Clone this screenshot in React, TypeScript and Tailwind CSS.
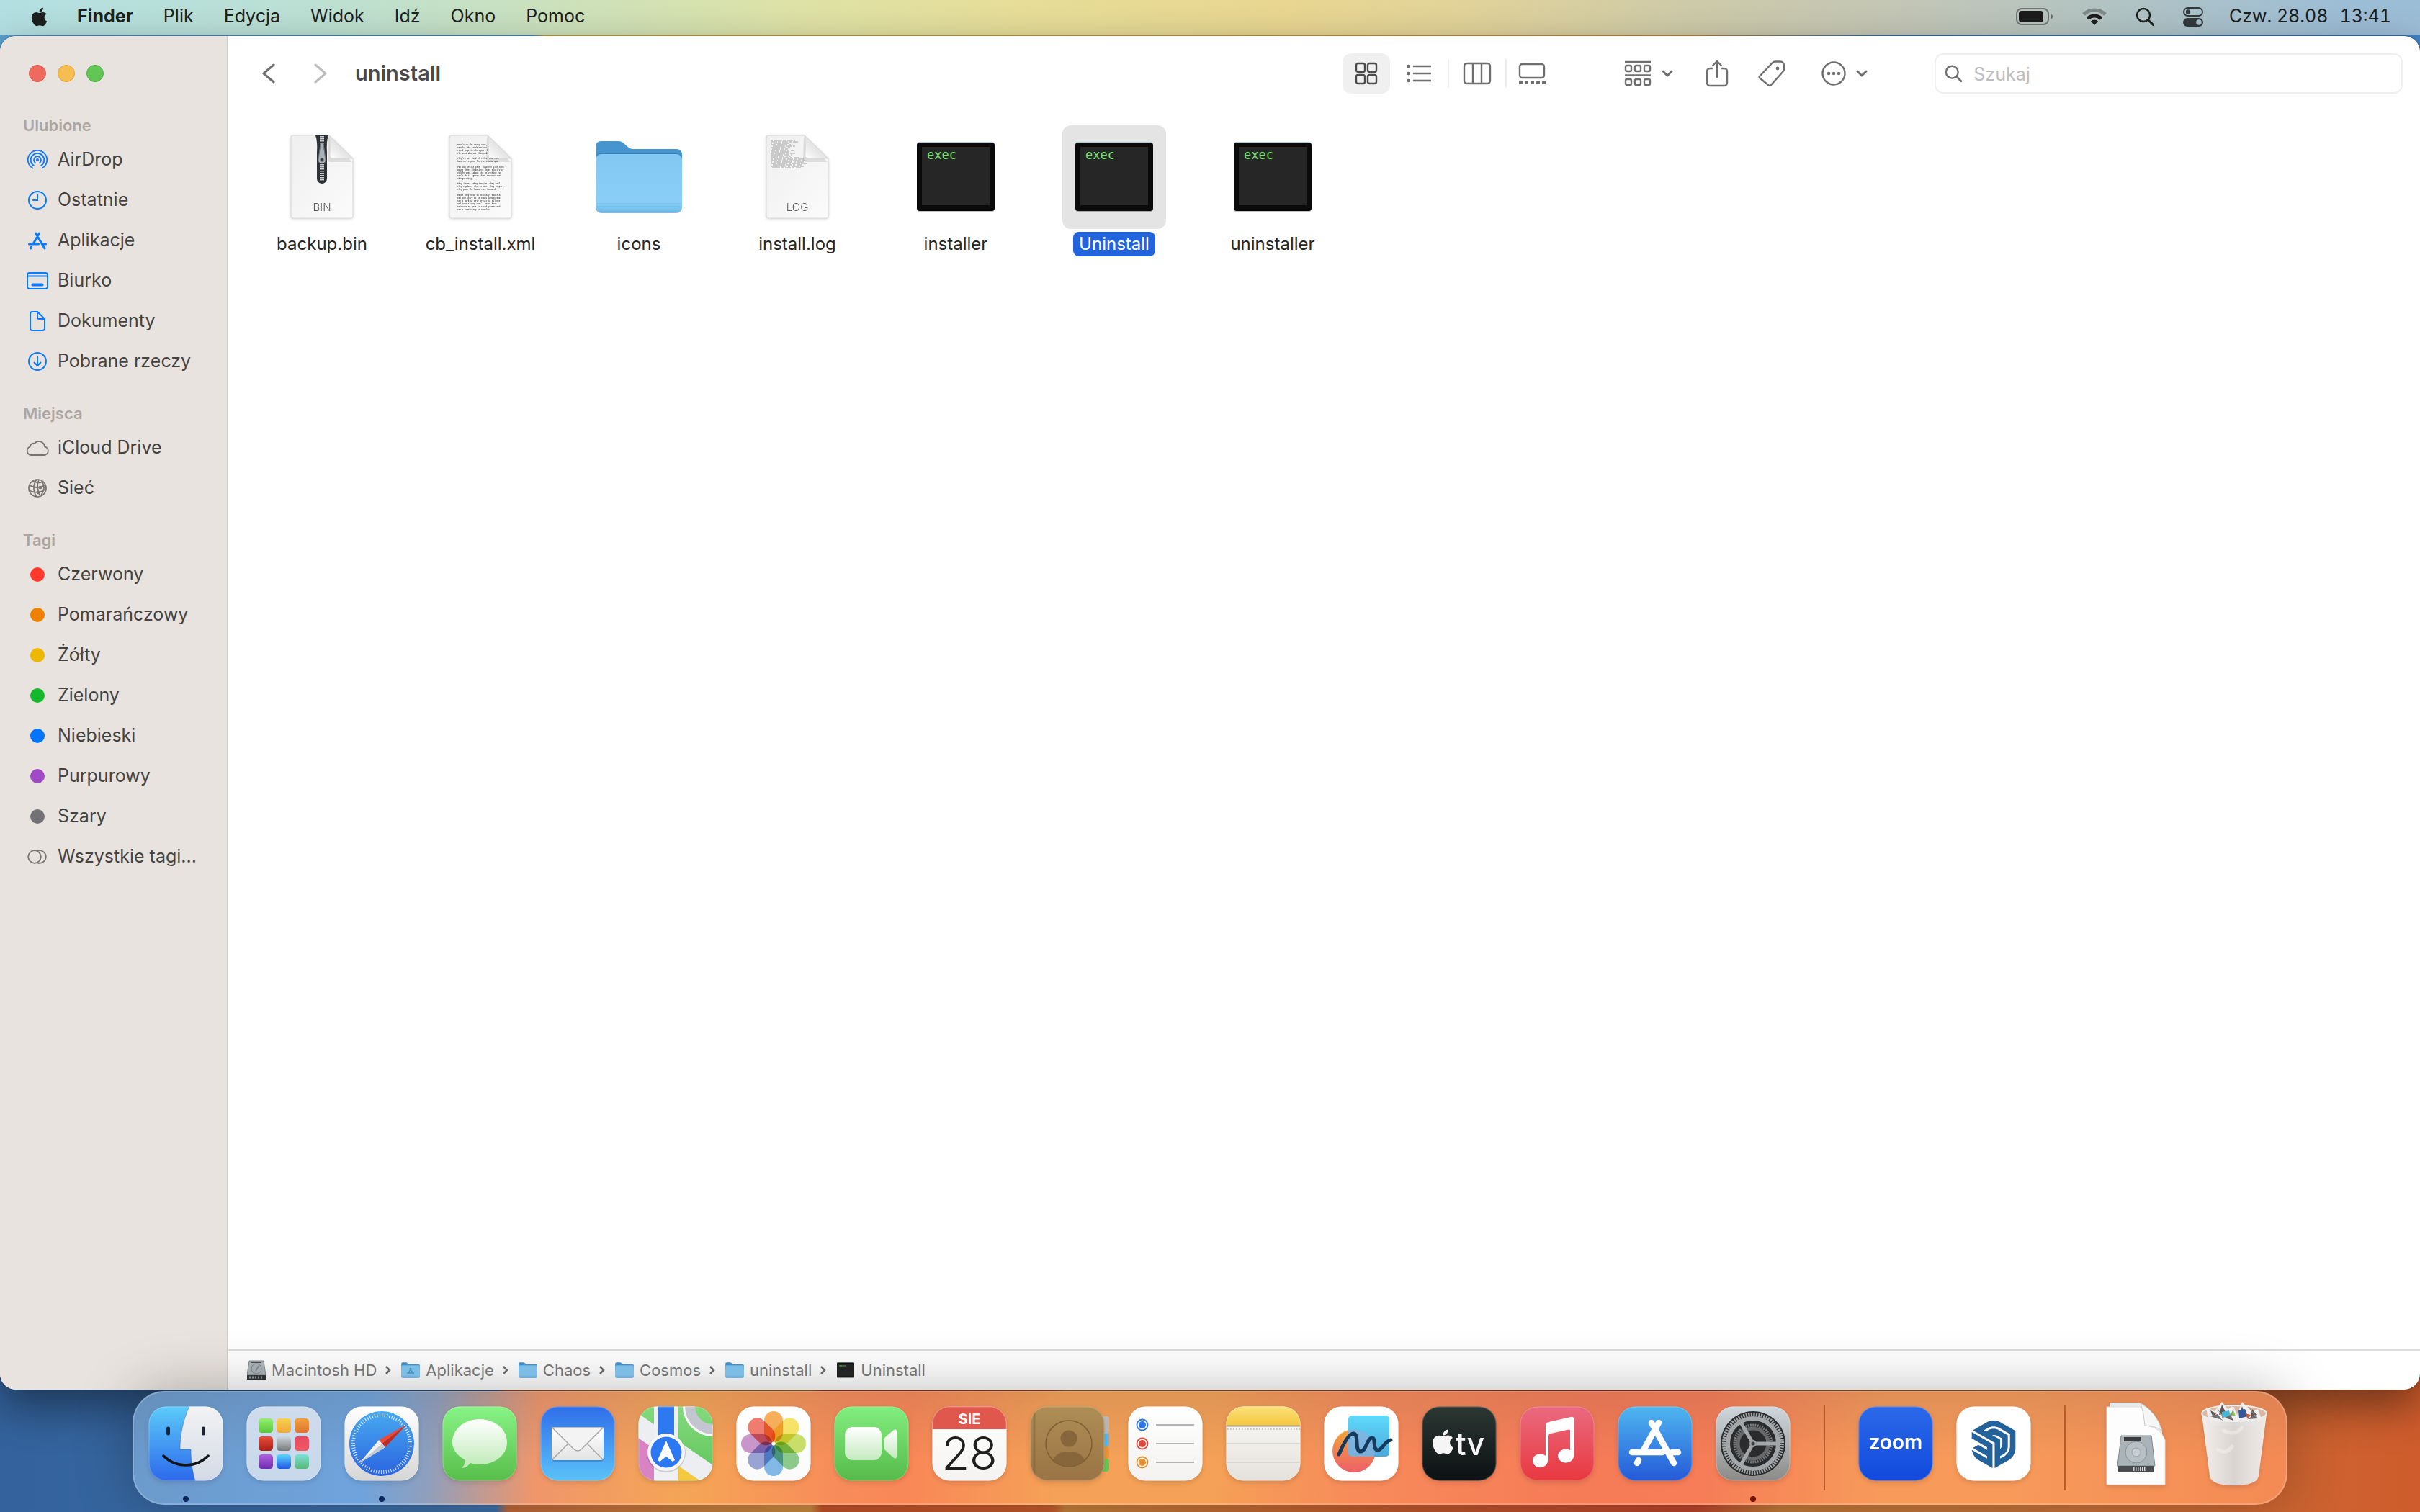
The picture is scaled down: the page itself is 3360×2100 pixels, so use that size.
import type { ReactNode } from 'react'
import { FaApple } from 'react-icons/fa'
import { SiSketchup } from 'react-icons/si'

type IconProps = { className?: string }

/* ---------- menu bar ---------- */

const menus = ['Plik', 'Edycja', 'Widok', 'Idź', 'Okno', 'Pomoc']

const BatteryIcon = () => (
  <svg viewBox="0 0 52 26" className="h-[26px] w-[52px]" fill="none" aria-hidden="true">
    <rect x="1" y="2" width="44" height="22" rx="7" stroke="#1c1c1c" strokeOpacity=".45" strokeWidth="2" />
    <rect x="4" y="5" width="34" height="16" rx="4" fill="#1c1c1c" />
    <path d="M48 9v8c2-1 3-2 3-4s-1-3-3-4z" fill="#1c1c1c" fillOpacity=".5" />
  </svg>
)

const WifiIcon = () => (
  <svg viewBox="0 0 34 26" className="h-[26px] w-[34px]" fill="none" strokeWidth="5" aria-hidden="true">
    <path d="M2 10a21.500 21.500 0 0 1 30 0" stroke="#1c1c1c" strokeOpacity=".35" />
    <path d="M7.500 16a13.500 13.500 0 0 1 19 0" stroke="#1c1c1c" />
    <path d="M17 25l-5-5.500a7 7 0 0 1 10 0z" fill="#1c1c1c" />
  </svg>
)

const SearchIcon = ({ className }: IconProps) => (
  <svg viewBox="0 0 26 26" className={className} fill="none" stroke="currentColor" strokeLinecap="round" aria-hidden="true">
    <circle cx="11" cy="11" r="9" strokeWidth="2.500" />
    <path d="M17.500 17.500l7 7" strokeWidth="3" />
  </svg>
)

const ControlCenterIcon = () => (
  <svg viewBox="0 0 28 28" className="size-7" aria-hidden="true">
    <rect x="1" y="2" width="26" height="11" rx="5.500" fill="none" stroke="#32383b" strokeWidth="2" />
    <circle cx="7" cy="7.500" r="3.200" fill="#32383b" />
    <rect x="0" y="16" width="28" height="12" rx="6" fill="#32383b" />
    <circle cx="22" cy="22" r="3.800" fill="#a6c0cc" />
  </svg>
)

const MenuBar = () => (
  <header className="flex h-12 items-center bg-[linear-gradient(90deg,#b3dfe2_0%,#bce0d3_13%,#cfe1b7_25%,#dee2a6_33%,#e6dd98_42%,#e8d691_53%,#e2d398_60%,#cdcaa9_70%,#c4c6b5_78%,#b0c3c4_88%,#9cbdd6_97%)] px-10 pb-0.5 text-[25px] text-[#1c1f1e]">
    <button type="button" aria-label="Apple" className="mr-[38px]">
      <FaApple className="size-[29px]" />
    </button>
    <nav className="flex items-center gap-[42px]">
      <button type="button" className="font-bold">
        Finder
      </button>
      {menus.map((menu) => (
        <button key={menu} type="button">
          {menu}
        </button>
      ))}
    </nav>
    <div className="ml-auto flex items-center gap-10">
      <BatteryIcon />
      <WifiIcon />
      <SearchIcon className="size-[26px]" />
      <ControlCenterIcon />
      <time className="-ml-1 flex gap-4 tabular-nums">
        <span>Czw. 28.08</span>
        <span>13:41</span>
      </time>
    </div>
  </header>
)

/* ---------- sidebar ---------- */

const AirDropIcon = () => (
  <svg viewBox="0 0 32 32" className="size-8" fill="none" stroke="#0a7aff" strokeWidth="1.800" strokeLinecap="round" aria-hidden="true">
    <circle cx="16" cy="16" r="2" fill="#0a7aff" stroke="none" />
    <path d="M13 20.200a5 5 0 1 1 6 0" />
    <path d="M11 24a9.300 9.300 0 1 1 10 0" />
    <path d="M9.500 27.500a13.200 13.200 0 1 1 13 0" />
  </svg>
)

const ClockIcon = () => (
  <svg viewBox="0 0 32 32" className="size-8" fill="none" stroke="#0a7aff" strokeWidth="2" strokeLinecap="round" aria-hidden="true">
    <circle cx="16" cy="16" r="12" />
    <path d="M16 8.500V16H10" />
  </svg>
)

const AppsIcon = () => (
  <svg viewBox="0 0 32 32" className="size-8" fill="none" stroke="#0a7aff" strokeWidth="3" strokeLinecap="round" aria-hidden="true">
    <path d="M18.500 6L10.500 20M13.500 6l12.500 21M4.500 21h13M23 21h4.500M7.500 25l-1 2" />
  </svg>
)

const DesktopIcon = () => (
  <svg viewBox="0 0 32 32" className="size-8" fill="none" stroke="#0a7aff" strokeWidth="2" aria-hidden="true">
    <rect x="2" y="5" width="28" height="22" rx="3" />
    <path d="M2 9.500h28" />
    <rect x="8" y="20" width="16" height="3" rx="1" fill="#0a7aff" stroke="#0a7aff" strokeWidth="1" />
  </svg>
)

const DocIcon = () => (
  <svg viewBox="0 0 32 32" className="size-8" fill="none" stroke="#0a7aff" strokeWidth="2" strokeLinejoin="round" aria-hidden="true">
    <path d="M9 3h7l10 10v13a3 3 0 0 1-3 3H9a3 3 0 0 1-3-3V6a3 3 0 0 1 3-3zM16 3v8a2 2 0 0 0 2 2h8" />
  </svg>
)

const DownloadIcon = () => (
  <svg viewBox="0 0 32 32" className="size-8" fill="none" stroke="#0a7aff" strokeWidth="2" strokeLinecap="round" strokeLinejoin="round" aria-hidden="true">
    <circle cx="16" cy="16" r="12" />
    <path d="M16 9.500v12M11.500 17.500l4.500 4.500 4.500-4.500" />
  </svg>
)

const CloudIcon = () => (
  <svg viewBox="0 0 32 32" className="size-8" fill="none" stroke="#777472" strokeWidth="1.800" strokeLinejoin="round" aria-hidden="true">
    <path d="M7.500 26a6 6 0 0 1-1.600-11.700 4.800 4.800 0 0 1 6-4.500A8 8 0 0 1 26 14.500 5.800 5.800 0 0 1 25.500 26z" />
  </svg>
)

const NetworkIcon = () => (
  <svg viewBox="0 0 32 32" className="size-8" fill="none" stroke="#777472" strokeWidth="1.700" aria-hidden="true">
    <circle cx="16" cy="16" r="12" />
    <path d="M15 4c-6 7-5 17 0 24M18 4c-3 7-2 17 2 23.500M22 6c4 6 4 13-1 20M5 12c7 4 15 4 22-1M4 19c8 4 17 3 24-2M10 6c3 3 10 3 13 1" />
    <circle cx="17" cy="22" r="1.500" fill="#777472" />
    <circle cx="20" cy="15" r="1.500" fill="#777472" />
  </svg>
)

const AllTagsIcon = () => (
  <svg viewBox="0 0 32 32" className="size-8" fill="none" stroke="#777472" strokeWidth="1.800" aria-hidden="true">
    <circle cx="12" cy="16" r="8.800" />
    <path d="M15.500 7.900a8.800 8.800 0 1 1 0 16.200" />
  </svg>
)

type SidebarEntry = { label: string; icon: ReactNode }

const tag = (label: string, color: string): SidebarEntry => ({
  label,
  icon: <span className={`size-5 rounded-full ${color}`} />,
})

const sections: { title: string; entries: SidebarEntry[] }[] = [
  {
    title: 'Ulubione',
    entries: [
      { label: 'AirDrop', icon: <AirDropIcon /> },
      { label: 'Ostatnie', icon: <ClockIcon /> },
      { label: 'Aplikacje', icon: <AppsIcon /> },
      { label: 'Biurko', icon: <DesktopIcon /> },
      { label: 'Dokumenty', icon: <DocIcon /> },
      { label: 'Pobrane rzeczy', icon: <DownloadIcon /> },
    ],
  },
  {
    title: 'Miejsca',
    entries: [
      { label: 'iCloud Drive', icon: <CloudIcon /> },
      { label: 'Sieć', icon: <NetworkIcon /> },
    ],
  },
  {
    title: 'Tagi',
    entries: [
      tag('Czerwony', 'bg-[#ff3a2d]'),
      tag('Pomarańczowy', 'bg-[#ee8100]'),
      tag('Żółty', 'bg-[#ecb900]'),
      tag('Zielony', 'bg-[#15b82c]'),
      tag('Niebieski', 'bg-[#0474f9]'),
      tag('Purpurowy', 'bg-[#a14ac6]'),
      tag('Szary', 'bg-[#727176]'),
      { label: 'Wszystkie tagi...', icon: <AllTagsIcon /> },
    ],
  },
]

const Sidebar = () => (
  <aside className="flex w-[317px] shrink-0 flex-col border-r-2 border-[#cfcac6] bg-[#e8e3df]">
    <div className="flex gap-4 px-10 pt-10 pb-[42px]">
      <button type="button" aria-label="Zamknij" className="size-6 rounded-full border border-[#d9584d] bg-[#ee6a5f]" />
      <button type="button" aria-label="Minimalizuj" className="size-6 rounded-full border border-[#dba43a] bg-[#f6be50]" />
      <button type="button" aria-label="Powiększ" className="size-6 rounded-full border border-[#4fae44] bg-[#61c655]" />
    </div>
    <nav className="flex flex-col gap-[26px]">
      {sections.map(({ title, entries }) => (
        <section key={title}>
          <h2 className="mb-0.5 h-9 pl-8 text-[22px] leading-9 font-semibold text-[#aca6a2]">{title}</h2>
          <ul>
            {entries.map(({ label, icon }) => (
              <li key={label}>
                <a href="#" className="flex h-14 items-center gap-3 pl-9 text-[25px] whitespace-nowrap text-[#454341]">
                  <span className="flex w-8 justify-center">{icon}</span>
                  {label}
                </a>
              </li>
            ))}
          </ul>
        </section>
      ))}
    </nav>
  </aside>
)

/* ---------- toolbar ---------- */

const Chevron = ({ className }: IconProps) => (
  <svg viewBox="0 0 16 10" className={className} fill="none" stroke="currentColor" strokeWidth="3" strokeLinecap="round" strokeLinejoin="round" aria-hidden="true">
    <path d="M2 2l6 6 6-6" />
  </svg>
)

const Toolbar = () => (
  <div className="flex h-[104px] shrink-0 items-center pr-6 pl-10 text-[#6f6f6f]">
    <button type="button" aria-label="Wstecz" className="flex w-8 justify-center">
      <svg viewBox="0 0 18 30" className="h-[30px] w-[18px]" fill="none" stroke="currentColor" strokeWidth="3" strokeLinecap="round" strokeLinejoin="round">
        <path d="M16 3L2 15l14 12" />
      </svg>
    </button>
    <button type="button" aria-label="Dalej" className="ml-10 flex w-8 justify-center text-[#bdbdbd]">
      <svg viewBox="0 0 18 30" className="h-[30px] w-[18px]" fill="none" stroke="currentColor" strokeWidth="3" strokeLinecap="round" strokeLinejoin="round">
        <path d="M2 3l14 12L2 27" />
      </svg>
    </button>
    <h1 className="ml-8 text-[29px] font-semibold text-[#4a4a4a]">uninstall</h1>

    <div className="ml-auto flex items-center">
      <button type="button" aria-label="Ikony" className="flex h-14 w-[66px] items-center justify-center rounded-xl bg-[#f0f0f0] text-[#4a4a4a]">
        <svg viewBox="0 0 32 32" className="size-8" fill="none" stroke="currentColor" strokeWidth="2.400">
          <rect x="2" y="2" width="12" height="12" rx="2.500" />
          <rect x="18" y="2" width="12" height="12" rx="2.500" />
          <rect x="2" y="18" width="12" height="12" rx="2.500" />
          <rect x="18" y="18" width="12" height="12" rx="2.500" />
        </svg>
      </button>
      <button type="button" aria-label="Lista" className="flex w-20 justify-center">
        <svg viewBox="0 0 34 26" className="h-[26px] w-[34px]" fill="none" stroke="currentColor" strokeWidth="2.600" strokeLinecap="round">
          <path d="M10 3h23M10 13h23M10 23h23" />
          <path d="M2.500 3h.1M2.500 13h.1M2.500 23h.1" strokeWidth="4.500" />
        </svg>
      </button>
      <span className="h-10 w-0.5 bg-[#ececec]" />
      <button type="button" aria-label="Kolumny" className="flex w-[78px] justify-center">
        <svg viewBox="0 0 40 32" className="h-8 w-10" fill="none" stroke="currentColor" strokeWidth="2.400">
          <rect x="2" y="2" width="36" height="28" rx="4" />
          <path d="M14 2v28M26 2v28" />
        </svg>
      </button>
      <span className="h-10 w-0.5 bg-[#ececec]" />
      <button type="button" aria-label="Galeria" className="flex w-[70px] justify-center">
        <svg viewBox="0 0 38 32" className="h-8 w-[38px]" fill="none" stroke="currentColor" strokeWidth="2.400">
          <rect x="2" y="3" width="34" height="19" rx="3.500" />
          <path d="M1 28.500h37" strokeWidth="5" strokeDasharray="5 3" />
        </svg>
      </button>
      <button type="button" aria-label="Grupuj" className="ml-[78px] flex w-[98px] items-center justify-center gap-3.5">
        <svg viewBox="0 0 38 36" className="h-9 w-[38px]" fill="none" stroke="currentColor" strokeWidth="2.400">
          <path d="M1 2h36M1 20.500h36" />
          <rect x="2" y="7" width="8" height="8" rx="2" />
          <rect x="15" y="7" width="8" height="8" rx="2" />
          <rect x="28" y="7" width="8" height="8" rx="2" />
          <rect x="2" y="26" width="8" height="8" rx="2" />
          <rect x="15" y="26" width="8" height="8" rx="2" />
          <rect x="28" y="26" width="8" height="8" rx="2" />
        </svg>
        <Chevron className="h-2.5 w-4" />
      </button>
      <button type="button" aria-label="Udostępnij" className="ml-2.5 flex w-[72px] justify-center">
        <svg viewBox="0 0 32 38" className="h-[38px] w-8" fill="none" stroke="currentColor" strokeWidth="2.400" strokeLinecap="round" strokeLinejoin="round">
          <path d="M10 12H6a4 4 0 0 0-4 4v16a4 4 0 0 0 4 4h20a4 4 0 0 0 4-4V16a4 4 0 0 0-4-4h-4M16 24V2M10 8l6-6 6 6" />
        </svg>
      </button>
      <button type="button" aria-label="Tagi" className="flex w-20 justify-center">
        <svg viewBox="0 0 38 38" className="size-[38px]" fill="none" stroke="currentColor" strokeWidth="2.400" strokeLinejoin="round">
          <path d="M2 23L20 4q1.500-1.500 3.500-1.500H31q2 0 3.500 1.500T36 7.500V13q0 2-1.500 3.500L18 35q-2 2-4 0L2.500 25.500q-1.500-1.500-.500-2.500z" />
          <circle cx="27" cy="12" r="2.400" fill="currentColor" stroke="none" />
        </svg>
      </button>
      <button type="button" aria-label="Więcej" className="ml-3 flex w-[98px] items-center justify-center gap-3.5">
        <svg viewBox="0 0 34 34" className="size-[34px]" fill="none" stroke="currentColor" strokeWidth="2.400">
          <circle cx="17" cy="17" r="15.500" />
          <path d="M10 17h.1M17 17h.1M24 17h.1" strokeWidth="4.500" strokeLinecap="round" />
        </svg>
        <Chevron className="h-2.5 w-4" />
      </button>
      <label className="ml-[76px] flex h-14 w-[650px] items-center gap-4 rounded-xl border-2 border-[#efefef] px-3">
        <SearchIcon className="size-[26px]" />
        <input type="search" aria-label="Szukaj" placeholder="Szukaj" className="w-full bg-transparent pt-1 text-[25px] outline-none placeholder:text-[#bebebe]" />
      </label>
    </div>
  </div>
)

/* ---------- files ---------- */

const PageShape = ({ children }: { children: ReactNode }) => (
  <svg viewBox="0 0 96 124" className="h-[124px] w-24 drop-shadow-sm" aria-hidden="true">
    <defs>
      <linearGradient id="page" x1="0" y1="0" x2="1" y2="1">
        <stop offset="0" stopColor="#efefef" />
        <stop offset="1" stopColor="#fbfbfb" />
      </linearGradient>
      <linearGradient id="curl" x1="0" y1="1" x2=".6" y2=".4">
        <stop offset="0" stopColor="#ffffff" />
        <stop offset="1" stopColor="#dcdcdc" />
      </linearGradient>
    </defs>
    <path d="M8 4h50l33 32v80a3 3 0 0 1-3 3H8a3 3 0 0 1-3-3V7a3 3 0 0 1 3-3z" fill="url(#page)" stroke="#d8d8d8" strokeWidth="1" />
    {children}
    <path d="M57 6l-1 31q0 4 4 4h30z" fill="#000000" fillOpacity=".1" />
    <path d="M58 4q2 8 1 28 0 4 4 4h28z" fill="url(#curl)" stroke="#d0d0d0" strokeWidth=".6" />
  </svg>
)

const BinFile = () => (
  <PageShape>
    <path d="M39 4h18q-3 8-2 24v36a7 7 0 0 1-14 0V28q1-16-2-24z" fill="#2e3135" />
    <path d="M48 5v62" stroke="#c9cdd0" strokeWidth="6" strokeDasharray="1.500 1.500" />
    <path d="M46 16q2-3 4 0l3 22q0 5-5 5t-5-5z" fill="#a9b0b6" stroke="#6d7378" strokeWidth="1" />
    <circle cx="48" cy="38" r="2.500" fill="#3a3d40" />
    <text x="48" y="109" textAnchor="middle" fontSize="15" fontWeight="300" fill="#5c5c5c">
      BIN
    </text>
  </PageShape>
)

const xmlLines: [number, string][] = [
  [18, "Here's to the crazy ones, the"],
  [22, 'rebels. The troublemakers. The'],
  [26, 'round pegs in the square holes.'],
  [30, 'The ones who see things different.'],
  [37, "They're not fond of rules. And they"],
  [41, 'have no respect for the status quo.'],
  [49, 'You can praise them, disagree with them,'],
  [53, 'quote them, disbelieve them, glorify or'],
  [57, 'vilify them. About the only thing you'],
  [61, "can't do is ignore them. Because they"],
  [65, 'change things.'],
  [72, 'They invent. They imagine. They heal.'],
  [76, 'They explore. They create. They inspire.'],
  [80, 'They push the human race forward.'],
  [88, 'Maybe they have to be crazy. How else'],
  [92, 'can you stare at an empty canvas and'],
  [96, 'see a work of art? Or sit in silence'],
  [100, "and hear a song that's never been"],
  [104, 'written? Or gaze at a red planet and'],
  [108, 'see a laboratory on wheels?'],
]

const XmlFile = () => (
  <PageShape>
    <g fontFamily="Liberation Mono, monospace" fontWeight="700" fontSize="2.750" fill="#4a4a4a">
      {xmlLines.map(([y, line]) => (
        <text key={y} x="16" y={y}>
          {line}
        </text>
      ))}
    </g>
  </PageShape>
)

const logRows = [34, 38, 26, 30, 36, 28, 24, 32, 26, 34, 30, 28, 40, 46, 48, 46, 50, 44, 46, 42]

const LogFile = () => (
  <PageShape>
    <g stroke="#999999" strokeWidth=".9">
      {logRows.map((width, i) => (
        <path key={i} d={`M11 ${11 + i * 2}h${width}`} strokeDasharray="3 2 11 1 5 1 8 2" strokeDashoffset={(i * 7) % 13} />
      ))}
    </g>
    <text x="48" y="109" textAnchor="middle" fontSize="15" fontWeight="300" fill="#5c5c5c">
      LOG
    </text>
  </PageShape>
)

const FolderIcon = ({ className }: IconProps) => (
  <svg viewBox="0 0 122 104" className={className} aria-hidden="true">
    <defs>
      <linearGradient id="folder" x1="0" y1="0" x2="0" y2="1">
        <stop offset="0" stopColor="#82c8f3" />
        <stop offset=".82" stopColor="#8acef8" />
        <stop offset=".92" stopColor="#7cc5f0" />
        <stop offset="1" stopColor="#6ab6e4" />
      </linearGradient>
    </defs>
    <path d="M1 22V10q0-8 8-8h24q4 0 7 3l7 6q2 2 6 2h60q8 0 8 8v30H1z" fill="#4795cf" />
    <rect x="1" y="19" width="120" height="83" rx="8" fill="#2b6ea3" fillOpacity=".5" />
    <rect x="1" y="20" width="120" height="81" rx="8" fill="url(#folder)" />
    <path d="M2 89h118M2 93h118" stroke="#6db8e6" strokeWidth=".8" />
  </svg>
)

const ExecIcon = ({ className }: IconProps) => (
  <svg viewBox="0 0 112 100" className={className} aria-hidden="true">
    <rect x="2" y="4" width="108" height="95" rx="5" fill="#000000" fillOpacity=".25" />
    <rect x="2" y="1" width="108" height="96" rx="4" fill="#a9cfe0" />
    <rect x="2" y="2" width="108" height="95" rx="4" fill="#0a0a0a" />
    <rect x="9" y="8" width="94" height="81" fill="#262626" />
    <text x="16" y="25" fontFamily="DejaVu Sans Mono, monospace" fontSize="17" fill="#75e06d">
      exec
    </text>
  </svg>
)

const files: { name: string; icon: ReactNode; selected?: boolean }[] = [
  { name: 'backup.bin', icon: <BinFile /> },
  { name: 'cb_install.xml', icon: <XmlFile /> },
  { name: 'icons', icon: <FolderIcon className="h-[104px] w-[122px]" /> },
  { name: 'install.log', icon: <LogFile /> },
  { name: 'installer', icon: <ExecIcon className="h-[100px] w-28" /> },
  { name: 'Uninstall', icon: <ExecIcon className="h-[100px] w-28" />, selected: true },
  { name: 'uninstaller', icon: <ExecIcon className="h-[100px] w-28" /> },
]

const FileGrid = () => (
  <ul className="flex flex-1 flex-wrap content-start pt-5 pl-5">
    {files.map(({ name, icon, selected }) => (
      <li key={name} className="w-[220px]">
        <button type="button" className="flex w-full flex-col items-center gap-1">
          <span className={`flex size-36 items-center justify-center rounded-xl ${selected ? 'bg-[#e4e4e4]' : ''}`}>{icon}</span>
          <span className={`rounded-lg px-2 text-2xl leading-[34px] ${selected ? 'bg-[#2264dc] text-white' : 'text-[#262626]'}`}>{name}</span>
        </button>
      </li>
    ))}
  </ul>
)

/* ---------- path bar ---------- */

const DriveIcon = () => (
  <svg viewBox="0 0 26 28" className="h-7 w-[26px]" aria-hidden="true">
    <path d="M3 1h20l3 20H0z" fill="#aeb6ba" stroke="#868d91" strokeWidth="1" />
    <circle cx="13" cy="12" r="7" fill="none" stroke="#7d858a" strokeWidth="1" />
    <path d="M12 15l5-8" stroke="#7d858a" strokeWidth="1.500" />
    <rect x="6" y="2" width="14" height="2" fill="#4c5154" />
    <path d="M0 21h26v6H0z" fill="#34383a" />
    <path d="M3 24h20" stroke="#9a9fa2" strokeWidth="3" strokeDasharray="2 2" />
  </svg>
)

const SmallFolder = () => <FolderIcon className="h-6 w-[26px]" />

const SmallAppsFolder = () => (
  <span className="relative flex">
    <SmallFolder />
    <svg viewBox="0 0 12 12" className="absolute top-2 left-[7px] size-3" stroke="#4a98cf" strokeWidth="1.300" aria-hidden="true">
      <path d="M7 1L3 8M5 1l5 9M1 8h7M9 8h2" />
    </svg>
  </span>
)

const pathItems: { name: string; icon: ReactNode }[] = [
  { name: 'Macintosh HD', icon: <DriveIcon /> },
  { name: 'Aplikacje', icon: <SmallAppsFolder /> },
  { name: 'Chaos', icon: <SmallFolder /> },
  { name: 'Cosmos', icon: <SmallFolder /> },
  { name: 'uninstall', icon: <SmallFolder /> },
  { name: 'Uninstall', icon: <ExecIcon className="h-[22px] w-[26px]" /> },
]

const PathBar = () => (
  <ol className="flex h-14 shrink-0 items-center border-t-2 border-[#dcdcdc] pl-[26px] text-[22px] text-[#7c7c7c]">
    {pathItems.map(({ name, icon }, i) => (
      <li key={name} className="flex items-center">
        {i > 0 && (
          <svg viewBox="0 0 8 12" className="mr-3.5 ml-3 h-3 w-2" fill="none" stroke="#6f6f6f" strokeWidth="2.500" aria-hidden="true">
            <path d="M1 1l5 5-5 5" />
          </svg>
        )}
        <a href="#" className="flex items-center gap-2">
          {icon}
          {name}
        </a>
      </li>
    ))}
  </ol>
)

/* ---------- dock icons, all drawn on a 104 unit plate ---------- */

const Gradient = ({ id, from, to }: { id: string; from: string; to: string }) => (
  <linearGradient id={id} x1="0" y1="0" x2="0" y2="1">
    <stop offset="0" stopColor={from} />
    <stop offset="1" stopColor={to} />
  </linearGradient>
)

const Plate = ({ id, from, to, children }: { id: string; from: string; to: string; children?: ReactNode }) => (
  <svg viewBox="0 0 104 104" className="size-[104px] drop-shadow-md" aria-hidden="true">
    <defs>
      <Gradient id={`${id}-bg`} from={from} to={to} />
      <clipPath id={`${id}-clip`}>
        <rect x="0.500" y="0.500" width="103" height="103" rx="24" />
      </clipPath>
    </defs>
    <g clipPath={`url(#${id}-clip)`}>
      <rect width="104" height="104" fill={`url(#${id}-bg)`} />
      {children}
    </g>
    <rect x="1" y="1" width="102" height="102" rx="23.500" fill="none" stroke="#ffffff" strokeOpacity=".25" />
  </svg>
)

const FinderApp = () => (
  <Plate id="finder" from="#5ccbf9" to="#2c69ec">
    <defs>
      <Gradient id="finder-face" from="#f2f2f3" to="#d3dae6" />
    </defs>
    <path d="M57 0C49 18 44 38 44 60h15c0 16 2 30 6 44h40V0z" fill="url(#finder-face)" />
    <path d="M57 0C49 18 44 38 44 60h15c0 16 2 30 6 44" fill="none" stroke="#2a4a78" strokeOpacity=".35" strokeWidth="1" />
    <path d="M27.500 31v7M76.500 31v7" stroke="#1c2430" strokeWidth="5" strokeLinecap="round" />
    <path d="M21 69q13 13 31 13t31-13" fill="none" stroke="#121418" strokeWidth="3.500" strokeLinecap="round" />
  </Plate>
)

const launchTiles = [
  ['#93ef6c', '#5ac73c'],
  ['#f8d04f', '#f0a83b'],
  ['#f0a13a', '#e07333'],
  ['#ea4f3c', '#a81f17'],
  ['#cdd6dc', '#77797a'],
  ['#ea4762', '#ee5b63'],
  ['#b260e0', '#6c2fae'],
  ['#5ad6fb', '#2257e6'],
  ['#7fe0d6', '#53b977'],
]

const LaunchpadApp = () => (
  <Plate id="launchpad" from="#cedcec" to="#c8d8ec">
    {launchTiles.map(([from, to], i) => (
      <g key={from + to}>
        <Gradient id={`tile-${i}`} from={from} to={to} />
        <rect x={17 + (i % 3) * 25} y={17 + Math.floor(i / 3) * 25} width="20" height="20" rx="4.500" fill={`url(#tile-${i})`} />
      </g>
    ))}
  </Plate>
)

const SafariApp = () => (
  <Plate id="safari" from="#ffffff" to="#d6d6d6">
    <defs>
      <Gradient id="safari-dial" from="#48aaf0" to="#2b63e0" />
    </defs>
    <circle cx="52" cy="52" r="45" fill="url(#safari-dial)" />
    <circle cx="52" cy="52" r="39.500" fill="none" stroke="#ffffff" strokeOpacity=".85" strokeWidth="5" strokeDasharray="1 2.447" />
    <path d="M86 26L48 47l9 10z" fill="#ea4a3c" />
    <path d="M86 26L52.500 52l4.500 5z" fill="#b92f25" />
    <path d="M21 79l27-32 9 10z" fill="#f2f2f2" />
    <path d="M21 79l31.500-27 4.500 5z" fill="#c6ccd2" />
  </Plate>
)

const MessagesApp = () => (
  <Plate id="messages" from="#88f486" to="#58bd4a">
    <defs>
      <Gradient id="bubble" from="#ffffff" to="#bdeab5" />
    </defs>
    <path d="M52 18c21 0 38 14 38 32S73 81 52 81c-5 0-9-.500-13-2-3 4-7 7-12 7 3-3 5-7 5-11C21 69 14 60 14 50c0-18 17-32 38-32z" fill="url(#bubble)" />
  </Plate>
)

const MailApp = () => (
  <Plate id="mail" from="#2f6ee9" to="#5ac3f9">
    <defs>
      <Gradient id="envelope" from="#ffffff" to="#e3e3e3" />
    </defs>
    <rect x="16" y="31" width="72" height="46" rx="4" fill="#1d4fa0" fillOpacity=".35" />
    <rect x="16" y="29" width="72" height="46" rx="4" fill="url(#envelope)" />
    <path d="M17 74l23-23M87 74L64 51" stroke="#a5a5a5" strokeWidth="1.500" />
    <path d="M17 30l29 29q6 6 12 0l29-29z" fill="#f3f3f3" stroke="#a5a5a5" strokeWidth="1.500" />
  </Plate>
)

const MapsApp = () => (
  <Plate id="maps" from="#84da7c" to="#5dc45a">
    <path d="M0 42l24 18v44H0z" fill="#d982c4" />
    <path d="M54 80l36 26H54z" fill="#f5c93f" />
    <path d="M0 10l104 72v34L0 44z" fill="#eceef2" />
    <circle cx="104" cy="0" r="34" fill="none" stroke="#ffffff" strokeWidth="16" />
    <circle cx="104" cy="0" r="32" fill="none" stroke="#c3c5cf" strokeWidth="14" />
    <path d="M22 0h34v104H22z" fill="#eef0f4" />
    <path d="M28 0h22v50H28z" fill="#2f79f0" />
    <circle cx="39" cy="65" r="27" fill="#000000" fillOpacity=".15" />
    <circle cx="39" cy="64" r="26" fill="#f6f6f8" />
    <circle cx="39" cy="64" r="21.500" fill="#2b78f2" />
    <path d="M39 48l12 27-3 2-9-7-9 7-3-2z" fill="#ffffff" />
  </Plate>
)

const petals = ['#f4a23d', '#f6e14e', '#c3da52', '#7bc478', '#6eb0e6', '#8a95d0', '#c285c5', '#ee6456']

const PhotosApp = () => (
  <Plate id="photos" from="#ffffff" to="#fafafa">
    {petals.map((color, i) => (
      <rect key={color} x="39" y="7" width="26" height="43" rx="13" fill={color} fillOpacity=".85" transform={`rotate(${i * 45} 52 52)`} className="mix-blend-multiply" />
    ))}
    <circle cx="52" cy="52" r="2.500" fill="#ffffff" />
  </Plate>
)

const FaceTimeApp = () => (
  <Plate id="facetime" from="#82ee80" to="#56ba49">
    <defs>
      <Gradient id="camera" from="#ffffff" to="#c5eabf" />
    </defs>
    <rect x="15" y="29" width="51" height="46" rx="11" fill="url(#camera)" />
    <path d="M69 47q0-2 2-4l12-10q4-2 4 2v35q0 4-4 2L71 61q-2-2-2-4z" fill="url(#camera)" />
  </Plate>
)

const CalendarApp = () => (
  <Plate id="calendar" from="#ffffff" to="#f4f3f1">
    <rect width="104" height="32" fill="#e0574e" />
    <text x="52" y="25" textAnchor="middle" fontSize="20" fontWeight="700" fill="#ffffff">
      SIE
    </text>
    <text x="52" y="88" textAnchor="middle" fontSize="63" fontWeight="300" fill="#1e1e1e">
      28
    </text>
  </Plate>
)

const ContactsApp = () => (
  <span className="relative flex">
    <svg viewBox="0 0 12 80" className="absolute top-3 -right-1.5 h-20 w-3" aria-hidden="true">
      <rect x="0" y="2" width="12" height="24" rx="4" fill="#b9b9bd" />
      <rect x="0" y="26" width="12" height="18" rx="4" fill="#5bb8ee" />
      <rect x="0" y="44" width="12" height="17" rx="4" fill="#f09334" />
      <rect x="0" y="61" width="12" height="18" rx="4" fill="#62cb55" />
    </svg>
    <span className="relative flex">
      <Plate id="contacts" from="#ae8d55" to="#9a7445">
        <path d="M6 0v104" stroke="#7f6038" strokeOpacity=".5" strokeWidth="3" />
        <circle cx="54" cy="52" r="32" fill="none" stroke="#7d5d33" strokeWidth="1.500" />
        <circle cx="54" cy="45" r="11.500" fill="#86663a" />
        <path d="M32 75q5-12 22-12t22 12a32 32 0 0 1-44 0z" fill="#86663a" />
      </Plate>
    </span>
  </span>
)

const RemindersApp = () => (
  <Plate id="reminders" from="#ffffff" to="#f3f2f0">
    {['#2b76ee', '#e2453a', '#e88d30'].map((color, i) => (
      <g key={color}>
        <circle cx="20" cy={26 + i * 26} r="7.500" fill="#ffffff" stroke={color} strokeWidth="1.800" />
        <circle cx="20" cy={26 + i * 26} r="5" fill={color} />
        <path d={`M39 ${26 + i * 26}h53`} stroke="#b4b4b6" strokeWidth="1.800" />
      </g>
    ))}
  </Plate>
)

const NotesApp = () => (
  <Plate id="notes" from="#fbfaf8" to="#e5e1db">
    <defs>
      <Gradient id="notes-top" from="#fbe17a" to="#f5c73f" />
    </defs>
    <rect width="104" height="27" fill="url(#notes-top)" />
    <path d="M0 27.500h104" stroke="#a59c82" strokeWidth="2" />
    <path d="M2 32h102" stroke="#b9b7b2" strokeWidth="1.500" strokeDasharray="1.500 2.500" />
    <path d="M0 52h104M0 78h104" stroke="#d1cfcb" strokeWidth="1.500" />
  </Plate>
)

const FreeformApp = () => (
  <Plate id="freeform" from="#ffffff" to="#ffffff">
    <defs>
      <Gradient id="ball" from="#f0a73c" to="#ee5f68" />
      <Gradient id="note" from="#5fdafb" to="#4ba8dc" />
    </defs>
    <circle cx="42" cy="62" r="30" fill="url(#ball)" />
    <rect x="34" y="13" width="57" height="57" rx="5" fill="url(#note)" />
    <path d="M34 33q4-1 8-1a30 30 0 0 1 28 38H39a5 5 0 0 1-5-5z" fill="#8fb0dc" fillOpacity=".7" />
    <path d="M21 67c6-14 14-29 20-29 9 0 1 25 10 25 8 0 9-19 16-19 6 0 0 17 8 17 6 0 10-13 18-14" fill="none" stroke="#143a5e" strokeWidth="5" strokeLinecap="round" />
  </Plate>
)

const TvApp = () => (
  <Plate id="tv" from="#2c3733" to="#0c1113">
    <FaApple x="10" y="30" size={39} color="#f5f5f5" />
    <text x="47" y="68" fontSize="43" fontWeight="500" fill="#f5f5f5">
      tv
    </text>
  </Plate>
)

const MusicApp = () => (
  <Plate id="music" from="#ea6a80" to="#e9383f">
    <path d="M36 27q0-4 4-5l31-7q4-1 4 3v52a11 9.500 0 1 1-5-9V34q0-2-2-1.500l-27 6q-2 .500-2 2.500v35a10.500 9.500 0 1 1-3-7z" fill="#ffffff" />
  </Plate>
)

const AppStoreApp = () => (
  <Plate id="appstore" from="#4fb7f0" to="#2459d8">
    <g stroke="#ffffff" strokeWidth="8.500" strokeLinecap="round">
      <path d="M57 23L36 61M47 23l31 56M20 64h42M76 64h8M29 75l-2 4" />
    </g>
  </Plate>
)

const SettingsApp = () => (
  <Plate id="settings" from="#cfd8de" to="#8b8a87">
    <circle cx="52" cy="52" r="45" fill="#2a2b2c" />
    <g fill="none" stroke="#a4a7a9">
      <circle cx="52" cy="52" r="40.500" strokeWidth="5" strokeDasharray="2.200 1.335" />
      <circle cx="52" cy="52" r="35" strokeWidth="6" />
      <circle cx="52" cy="52" r="25.500" strokeWidth="4" strokeDasharray="2 1.205" stroke="#77797b" />
      <circle cx="52" cy="52" r="21" strokeWidth="5" stroke="#68696b" />
      <path d="M52 52h33M52 52L35.500 23.500M52 52L35.500 80.500" strokeWidth="5" />
    </g>
    <circle cx="52" cy="52" r="5" fill="#9a9da0" />
    <circle cx="52" cy="52" r="2.500" fill="#3a3b3c" />
  </Plate>
)

const ZoomApp = () => (
  <Plate id="zoom" from="#2c69e8" to="#1049dd">
    <text x="52" y="60" textAnchor="middle" fontSize="28" fontWeight="600" fill="#ffffff">
      zoom
    </text>
  </Plate>
)

const SketchUpApp = () => (
  <Plate id="sketchup" from="#ffffff" to="#ffffff">
    <SiSketchup x="19" y="20" size={66} color="#24629c" />
  </Plate>
)

const DiskImage = () => (
  <svg viewBox="0 0 84 118" className="h-[118px] w-[84px] drop-shadow-md" aria-hidden="true">
    <path d="M5 2h40q10 3 18 14t15 26v50H5z" fill="#e9e9e9" />
    <path d="M1 8h50q6 12 4 26 20 2 27 20v62H1z" fill="#fdfdfd" stroke="#e0e0e0" strokeWidth="1" />
    <path d="M48 3q5 14 6 31 13 0 24 7-8-26-30-38z" fill="#f6f6f6" stroke="#c9c9c9" strokeWidth="1" />
    <path d="M21 48h42l5 42H16z" fill="#a9b3b8" stroke="#7f888c" strokeWidth="1" />
    <rect x="25" y="50" width="24" height="6" fill="#3a3d40" />
    <circle cx="42" cy="71" r="15" fill="#b7c0c4" stroke="#88929a" strokeWidth="1" />
    <circle cx="42" cy="71" r="6" fill="#c7ced1" stroke="#98a1a7" strokeWidth="1" />
    <path d="M17 90h50v8H17z" fill="#4a4d50" />
    <path d="M38 94h18" stroke="#d2d5d7" strokeWidth="6" strokeDasharray="1.500 1.500" />
  </svg>
)

const TrashIcon = () => (
  <svg viewBox="0 0 94 120" className="h-[120px] w-[94px] drop-shadow-md" aria-hidden="true">
    <defs>
      <linearGradient id="bin" x1="0" y1="0" x2="1" y2="0">
        <stop offset="0" stopColor="#f4f3f2" />
        <stop offset=".5" stopColor="#dad8d7" />
        <stop offset="1" stopColor="#f0efee" />
      </linearGradient>
    </defs>
    <ellipse cx="47" cy="18" rx="45" ry="11" fill="#d8b7a3" stroke="#f2ece8" strokeWidth="2" />
    <path d="M10 22L8 10l12 5 10-13 8 10 8-4 5 12 7-18 14 14 8-4 5 14-8 9H18z" fill="#f1efee" />
    <path d="M14 14l8 4-4 6zM30 6l6 12-10 2zM58 8l4 12-8 3zM72 12l6 8-8 4z" fill="#5a5654" />
    <path d="M30 16l10-2 2 8-12 2z" fill="#47b5d6" />
    <path d="M40 20l6-6 3 8z" fill="#7ec05a" />
    <path d="M53 14l9-2 4 10-12 3z" fill="#33589c" />
    <path d="M62 18l8 2-4 6z" fill="#c4603a" />
    <path d="M14 22l10-3 6 8zM34 24l8-4 4 8zM66 26l8-6 6 5z" fill="#6e6966" />
    <path d="M18 20l14 8M24 12l8 12M68 10l10 14M46 12l-4 12" stroke="#8c8885" strokeWidth="1" />
    <path d="M2 19q8 11 45 11t45-11l-11 86q-2 13-34 13t-34-13z" fill="url(#bin)" fillOpacity=".96" />
    <path d="M32 42q16 8 26-4M24 68q12 8 20-4" fill="none" stroke="#ffffff" strokeOpacity=".3" strokeWidth="5" strokeLinecap="round" />
  </svg>
)

/* ---------- dock ---------- */

type DockEntry = { name: string; icon: ReactNode; running?: boolean }

const systemApps: DockEntry[] = [
  { name: 'Finder', icon: <FinderApp />, running: true },
  { name: 'Launchpad', icon: <LaunchpadApp /> },
  { name: 'Safari', icon: <SafariApp />, running: true },
  { name: 'Wiadomości', icon: <MessagesApp /> },
  { name: 'Mail', icon: <MailApp /> },
  { name: 'Mapy', icon: <MapsApp /> },
  { name: 'Zdjęcia', icon: <PhotosApp /> },
  { name: 'FaceTime', icon: <FaceTimeApp /> },
  { name: 'Kalendarz', icon: <CalendarApp /> },
  { name: 'Kontakty', icon: <ContactsApp /> },
  { name: 'Przypomnienia', icon: <RemindersApp /> },
  { name: 'Notatki', icon: <NotesApp /> },
  { name: 'Freeform', icon: <FreeformApp /> },
  { name: 'TV', icon: <TvApp /> },
  { name: 'Muzyka', icon: <MusicApp /> },
  { name: 'App Store', icon: <AppStoreApp /> },
  { name: 'Ustawienia systemowe', icon: <SettingsApp />, running: true },
]

const extraApps: DockEntry[] = [
  { name: 'Zoom', icon: <ZoomApp /> },
  { name: 'SketchUp', icon: <SketchUpApp /> },
]

const stacks: DockEntry[] = [
  { name: 'Obraz dysku', icon: <DiskImage /> },
  { name: 'Kosz', icon: <TrashIcon /> },
]

const DockGroup = ({ entries }: { entries: DockEntry[] }) => (
  <>
    {entries.map(({ name, icon, running }) => (
      <button key={name} type="button" aria-label={name} className="relative flex h-full w-[136px] items-center justify-center pb-3">
        {icon}
        {running && <span className={`absolute bottom-0.5 size-2 rounded-full ${name === 'Ustawienia systemowe' ? 'bg-[#6d1206]' : 'bg-[#0a2658]'}`} />}
      </button>
    ))}
  </>
)

const DockDivider = () => (
  <span className="flex w-[62px] justify-center">
    <span className="h-[118px] w-0.5 bg-[#b85c2c]" />
  </span>
)

const Dock = () => (
  <footer className="relative mx-auto mt-0.5 mb-2.5 flex h-[158px] items-center rounded-[44px] border-2 border-white/20 bg-[linear-gradient(180deg,rgba(60,60,60,.12),transparent_60%),linear-gradient(95deg,#6b9acb_0%,#70a3dc_11%,#8f9fbd_14%,#f0966a_19%,#f5a556_26%,#f78c5a_33%,#f98757_36%,#f5a157_43%,#f5a157_50%,#f78b5a_57%,#f67b57_67%,#f67d57_73%,#f79a5a_81%,#f79a5a_87%,#f48a55_100%)] bg-origin-border px-1 shadow-[0_0_80px_rgba(0,0,0,.28)]">
    <DockGroup entries={systemApps} />
    <DockDivider />
    <DockGroup entries={extraApps} />
    <DockDivider />
    <DockGroup entries={stacks} />
  </footer>
)

/* ---------- desktop ---------- */

const App = () => (
  <div className="flex min-h-screen flex-col overflow-hidden bg-[linear-gradient(90deg,#5ba1cf_0%,#4f98cc_22%,#d2b64e_22.500%,#d9ab4a_50%,#cf9a4a_70%,#3f7fc0_78%,#4383c6_100%),linear-gradient(90deg,#33629c_0%,#3d6fa6_20.500%,#c0683a_21%,#c98a3e_33.500%,#bf5028_34%,#c25a2c_43.500%,#c4803a_44%,#c05a2c_57%,#b9432a_70%,#c27a38_73.500%,#c8733a_85%,#cf5c2c_100%)] bg-[length:100%_300px,100%_100%] bg-no-repeat font-[Inter,'Open_Sans',sans-serif]">
    <MenuBar />
    <main className="mt-0.5 flex flex-1 overflow-hidden rounded-[22px] bg-white shadow-[0_0_2px_rgba(0,0,0,.6),0_24px_60px_rgba(0,0,0,.45)]">
      <Sidebar />
      <div className="flex min-w-0 flex-1 flex-col">
        <Toolbar />
        <FileGrid />
        <PathBar />
      </div>
    </main>
    <Dock />
  </div>
)

export default App
